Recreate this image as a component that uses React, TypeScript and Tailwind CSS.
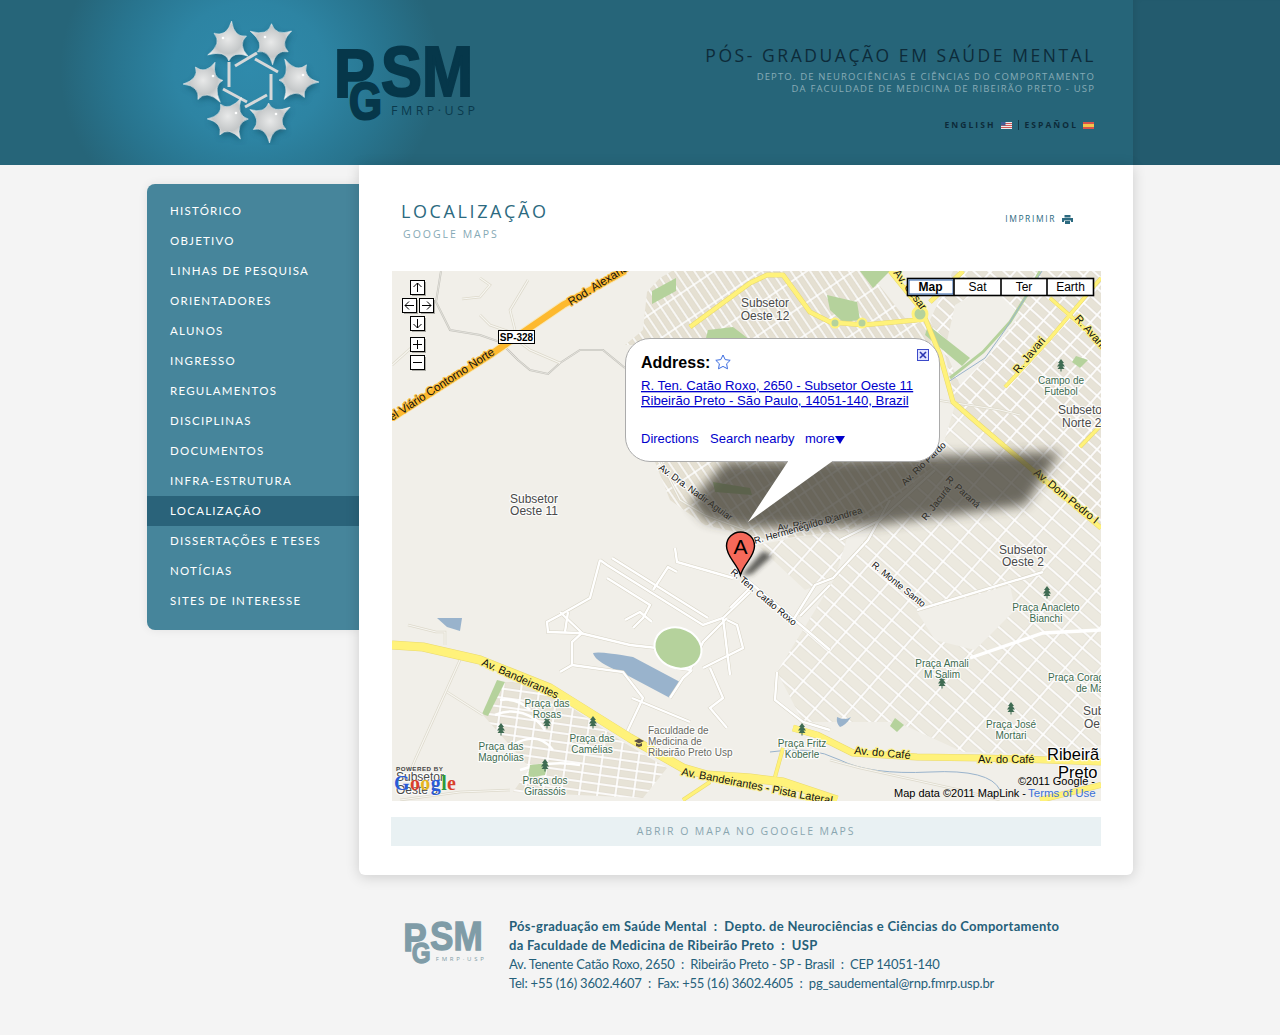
import React from "react";

const nav = ["HISTÓRICO","OBJETIVO","LINHAS DE PESQUISA","ORIENTADORES","ALUNOS","INGRESSO","REGULAMENTOS","DISCIPLINAS","DOCUMENTOS","INFRA-ESTRUTURA","LOCALIZAÇÃO","DISSERTAÇÕES E TESES","NOTÍCIAS","SITES DE INTERESSE"];

function starPath(cx: number, cy: number, r: number, rot: number) {
  const radii = [1, 0.8, 0.95, 0.74, 1.08, 0.84];
  const n = radii.length;
  const pts = radii.map((k, i) => {
    const a = rot + (i * Math.PI * 2) / n;
    return [cx + Math.cos(a) * r * k, cy + Math.sin(a) * r * k];
  });
  let d = `M${pts[0][0].toFixed(1)} ${pts[0][1].toFixed(1)}`;
  for (let i = 1; i <= n; i++) {
    const p = pts[i % n];
    const a = rot + ((i - 0.5) * Math.PI * 2) / n;
    const cpx = cx + Math.cos(a) * r * 0.32;
    const cpy = cy + Math.sin(a) * r * 0.32;
    d += `Q${cpx.toFixed(1)} ${cpy.toFixed(1)} ${p[0].toFixed(1)} ${p[1].toFixed(1)}`;
  }
  return d + "Z";
}

function Stars() {
  const stars: [number, number, number][] = [[230,44,-1.5],[272,43,-0.55],[296,81,0.05],[269,120,1.55],[229,119,1.05],[206,82,3.05]];
  const arms = ["229 62 229 87","235 66 257 53","255 59 278 72","271 74 271 100","267 95 245 107","247 102 223 89"];
  return (
    <svg width="140" height="130" viewBox="180 15 140 130" className="block">
      <defs>
        <radialGradient id="silver" cx="50%" cy="45%" r="60%">
          <stop offset="0%" stopColor="#e8e9e9" />
          <stop offset="60%" stopColor="#c4c7c8" />
          <stop offset="100%" stopColor="#f1f1f1" />
        </radialGradient>
        <filter id="starBlur" x="-40%" y="-40%" width="180%" height="180%"><feGaussianBlur stdDeviation="3" /></filter>
      </defs>
      {stars.map(([x, y, r], i) => <path key={i} d={starPath(x + 1, y + 3, 23, r)} fill="#0d3d50" opacity="0.5" filter="url(#starBlur)" />)}
      {arms.map((a, i) => {
        const [x1, y1, x2, y2] = a.split(" ");
        return <line key={i} x1={x1} y1={y1} x2={x2} y2={y2} stroke="#d6d8d9" strokeWidth="3" />;
      })}
      {stars.map(([x, y, r], i) => <path key={i} d={starPath(x, y, 23, r)} fill="url(#silver)" stroke="#f5f5f5" strokeWidth="0.5" strokeLinejoin="miter" />)}
      {stars.map(([x, y], i) => <circle key={i} cx={x + (i < 2 ? -7 : 7)} cy={y - 6} r="1.3" fill="#fff" />)}
    </svg>
  );
}

function PgsmLogo({ color, width, sub, small }: { color: string; width: number; sub: string; small?: boolean }) {
  return (
    <svg width={width} height={(width * 79) / 145} viewBox="332 43 145 79" className="block">
      <g fill={color} stroke={color} strokeWidth="2.2" fontWeight="700" fontFamily="Liberation Sans, sans-serif">
        <text x="334" y="97" fontSize="69" textLength="41" lengthAdjust="spacingAndGlyphs">P</text>
        <text x="349" y="119" fontSize="52" textLength="33" lengthAdjust="spacingAndGlyphs">G</text>
        <text x="381" y="96" fontSize="70" textLength="92" lengthAdjust="spacingAndGlyphs">SM</text>
      </g>
      <text x="391" y="115" fontSize={small ? 10.5 : 12.5} fill={sub} textLength="84" fontFamily="Open Sans, sans-serif">FMRP·USP</text>
    </svg>
  );
}

type LProps = { x: number; y: number; t: string; a?: "start" | "middle" | "end"; c?: string; s?: number; r?: number; h?: string };
function L({ x, y, t, a = "middle", c = "#4a4a4a", s = 10.5, r, h = "#fff" }: LProps) {
  return (
    <text x={x} y={y} textAnchor={a} fill={c} fontSize={s} stroke={h} strokeOpacity="0.85" strokeWidth="2.4" paintOrder="stroke" strokeLinejoin="round" transform={r !== undefined ? `rotate(${r} ${x} ${y})` : undefined}>{t}</text>
  );
}

function Tree({ x, y }: { x: number; y: number }) {
  return <path d={`M${x} ${y - 6}l-3 4h1.5l-2.5 3.5h2.5l-2 2.5h3v2.5h1v-2.5h3l-2-2.5h2.5l-2.5-3.5h1.5z`} fill="#3f6b52" />;
}

const white = [
  "600 560 607 565 703 625 723 618 750 592",
  "612 558 708 618",
  "600 560 590 598 560 615 547 622 548 632 580 633 630 645 657 648",
  "565 632 568 612",
  "560 612 582 633 572 642 572 665 560 672",
  "572 665 623 672 643 698 627 732",
  "653 590 668 567 677 572",
  "607 578 650 605 643 618 633 628",
  "625 620 640 612 652 622",
  "675 548 677 562 733 578",
  "657 648 677 668 690 670 703 642 727 618",
  "703 668 743 648 737 625 727 620",
  "670 698 683 678 692 670",
  "710 668 723 698 710 708 727 728",
  "632 698 690 722",
  "723 618 730 675",
  "733 568 803 627 830 650",
  "750 588 730 608",
  "790 625 815 585 833 578 868 540 890 500",
  "777 672 775 700 803 722 830 730",
  "840 540 880 520 935 470",
  "917 610 1043 572",
  "800 616 830 585",
];
const pale = [
  "441 271 436 302 450 330 480 335 500 342 518 360 530 370 548 374 560 363 580 350 603 350 625 368",
  "462 299 480 297 490 285 480 278","528 280 510 310 515 330","480 315 490 325 510 332","510 335 530 350 560 363",
  "392 365 420 340","408 625 436 632 445 632 445 645","460 660 415 760 410 772","447 692 483 715","660 460 680 500 705 515 745 530",
  "510 790 460 792 400 800","905 395 1000 410 1020 415","830 760 860 768 960 790 1000 800",
];
const yellow: [string, number][] = [
  ["690 327 750 283 767 275 783 275 810 312 830 322 863 325 917 320 923 313 940 355 953 402 983 428 1101 528", 4],
  ["890 271 920 308", 4], ["963 271 930 302", 4], ["1005 387 1047 342 1101 278", 3], ["1050 298 1101 343", 3], ["1080 447 1101 425", 3],
  ["793 728 817 735 853 753 917 757 983 758 1047 760 1101 762", 6], ["783 748 775 777", 3], ["683 800 710 782", 3],
  ["392 645 423 647 480 660 550 688 630 738 683 768 707 775 750 778 783 782 837 800", 8],
  ["1040 800 1101 785", 5],
];

function MapSvg() {
  const btn = (x: number, y: number, w: string) => (
    <g key={x + "-" + y}>
      <rect x={x + 1.5} y={y + 1.5} width="14" height="14" fill="#8b8b85" opacity="0.7" />
      <rect x={x} y={y} width="14" height="14" fill="#fff" stroke="#000" />
      <path d={w} fill="none" stroke="#000" strokeWidth="1" />
    </g>
  );
  const Y = "#fff27a";
  return (
    <svg width="709" height="530" viewBox="392 271 709 530" className="block font-['Liberation_Sans',sans-serif]">
      <defs>
        <pattern id="pNW" width="8" height="26" patternUnits="userSpaceOnUse" patternTransform="rotate(-34)"><rect width="8" height="26" fill="#fff" /><rect x="1" y="1" width="6" height="24" fill="#e5e0d2" stroke="#d8d3c4" strokeWidth="0.4" /></pattern>
        <pattern id="pNE" width="18" height="10" patternUnits="userSpaceOnUse" patternTransform="rotate(42)"><rect width="18" height="10" fill="#fff" /><rect x="1.1" y="1.1" width="15.8" height="7.8" fill="#e7e3d7" stroke="#d8d3c4" strokeWidth="0.4" /></pattern>
        <pattern id="pSE" width="27" height="13" patternUnits="userSpaceOnUse" patternTransform="rotate(41)"><rect width="27" height="13" fill="#fff" /><rect x="1.1" y="1.1" width="24.8" height="10.8" fill="#ece9df" stroke="#d8d3c4" strokeWidth="0.4" /></pattern>
        <pattern id="pSW" width="18" height="9" patternUnits="userSpaceOnUse" patternTransform="rotate(8)"><rect width="18" height="9" fill="#fff" /><rect x="1.1" y="1.1" width="15.8" height="6.8" fill="#e7e3d7" stroke="#d8d3c4" strokeWidth="0.4" /></pattern>
        <filter id="bubbleBlur" x="-20%" y="-40%" width="140%" height="180%"><feGaussianBlur stdDeviation="6" /></filter>
        <filter id="pinBlur" x="-50%" y="-50%" width="200%" height="200%"><feGaussianBlur stdDeviation="2.5" /></filter>
      </defs>
      <rect x="392" y="271" width="709" height="530" fill="#f1efe9" />
      <polygon points="647,292 660,278 672,271 868,271 905,318 935,320 930,345 625,345 643,330" fill="url(#pNW)" />
      <polygon points="655,462 940,462 880,510 850,530 770,540 705,525 670,500" fill="url(#pNW)" />
      <polygon points="953,271 1101,271 1101,528 985,430 955,400 945,355 930,320" fill="url(#pNE)" />
      <polygon points="835,578 880,520 938,462 955,405 985,430 1101,528 1101,745 1050,755 963,752 897,722 803,722 777,672" fill="url(#pSE)" />
      <polygon points="757,545 850,528 835,578 805,590" fill="url(#pSE)" />
      <polygon points="955,305 990,285 1020,315 985,360 960,385 945,350" fill="#f1efe9" />
      <polygon points="917,612 1010,585 1015,610 975,650 935,640" fill="#f1efe9" />
      <polygon points="483,715 497,682 533,682 623,742 667,768 643,798 513,792 530,768" fill="url(#pSW)" />
      {["M500 700a35 35 0 0 1 30 10","M495 715a40 40 0 0 1 50 15","M513 745q25-15 40 5","M520 770q30-10 60-5"].map((d, i) => <path key={i} d={d} fill="none" stroke="#fff" strokeWidth="2.5" />)}

      <g fill="#b5d29c">
        <polygon points="652,291 676,278 676,291 652,304" />
        <polygon points="708,330 733,327 750,340 720,345 706,338" />
        <polygon points="827,295 857,302 860,320 843,322 830,310" />
        <polygon points="860,271 890,271 873,288" />
        <polygon points="928,325 970,358 962,366 925,335" />
        <polygon points="713,482 750,488 752,495 715,492" />
        <polygon points="497,680 505,682 488,716 482,714" />
        <polygon points="530,765 548,763 545,775 528,778" />
        <polygon points="1076,356 1088,360 1080,368 1072,362" />
        <polygon points="895,718 904,725 897,732 890,726" />
      </g>
      <path d="M950 378 L983 352 L1010 322 L1030 290 L1040 271" fill="none" stroke="#b5d29c" strokeWidth="3" />
      <path d="M948 382 L985 358 L1005 330 L1025 298 L1042 271" fill="none" stroke="#99b3cc" strokeWidth="1" />
      <path d="M770 752 Q810 745 840 760 T930 772 T1000 790" fill="none" stroke="#99b3cc" strokeWidth="1" />
      <g fill="#99b3cc">
        <path d="M593 653 Q600 651 633 657 L680 682 L670 698 L623 673 Q595 662 593 653Z" />
        <polygon points="437,618 462,618 460,631 447,627" />
        <path d="M837 717 Q845 721 851 717 Q846 725 840 727 Q836 723 837 717Z" />
      </g>

      {pale.map((p, i) => <polyline key={i} points={p} fill="none" stroke={i === 0 ? "#c4c2bb" : "#ddd9cb"} strokeWidth={i === 0 ? 2 : 2.6} />)}
      {pale.map((p, i) => <polyline key={i} points={p} fill="none" stroke="#f7f6f1" strokeWidth={i === 0 ? 0.6 : 1.2} />)}
      {white.map((p, i) => <polyline key={i} points={p} fill="none" stroke="#d8d4c6" strokeWidth="3.4" />)}
      {white.map((p, i) => <polyline key={i} points={p} fill="none" stroke="#fff" strokeWidth="2.4" />)}
      <polyline points="970,658 1043,633 1101,630" fill="none" stroke="#fff" strokeWidth="3.4" />
      <ellipse cx="678" cy="648" rx="24" ry="20" transform="rotate(22 678 648)" fill="#b5d29c" stroke="#fff" strokeWidth="2" />

      <polyline points="392,418 490,355 563,305 625,271" fill="none" stroke="#f7e8bb" strokeWidth="8.5" />
      <polyline points="392,418 490,355 563,305 625,271" fill="none" stroke="#fdb92f" strokeWidth="6.5" />
      {yellow.map(([p, w], i) => <polyline key={i} points={p} fill="none" stroke="#e9d96f" strokeLinejoin="round" strokeWidth={w + 1} />)}
      {yellow.map(([p, w], i) => <polyline key={i} points={p} fill="none" stroke={Y} strokeLinejoin="round" strokeWidth={w} />)}
      <circle cx="920" cy="314" r="7" fill="#b5d29c" stroke={Y} strokeWidth="3" />
      <circle cx="835" cy="323" r="4.5" fill="#b5d29c" stroke={Y} strokeWidth="2" />
      <circle cx="862" cy="323" r="4.5" fill="#b5d29c" stroke={Y} strokeWidth="2" />

      <L x={392} y={421} t="el Viário Contorno Norte" a="start" c="#111" s={11.5} r={-33} h="#fdb92f" />
      <L x={571} y={306} t="Rod. Alexandre" a="start" c="#111" s={11.5} r={-32} h="#fdb92f" />
      <L x={893} y={273} t="Av. César" a="start" c="#111" s={11} r={53} h={Y} />
      <L x={1018} y={374} t="R. Javari" a="start" c="#111" s={11} r={-50} h={Y} />
      <L x={1074} y={319} t="R. Avanhandava" a="start" c="#111" s={11} r={48} h={Y} />
      <L x={1033} y={474} t="Av. Dom Pedro I" a="start" c="#111" s={11} r={39} h={Y} />
      <L x={905} y={486} t="Av. Rio Pardo" a="start" c="#111" s={9.5} r={-44} />
      <L x={945} y={480} t="R. Paraná" a="start" c="#111" s={9.5} r={42} />
      <L x={926} y={521} t="R. Jacurá" a="start" c="#111" s={9.5} r={-52} />
      <L x={658} y={469} t="Av. Dra. Nadir Aguiar" a="start" c="#111" s={9.5} r={36} />
      <L x={778} y={531} t="Av. Rio Pardo" a="start" c="#111" s={9.5} r={-8} />
      <L x={755} y={544} t="R. Hermenegildo D'andrea" a="start" c="#111" s={9.5} r={-16} />
      <L x={730} y={573} t="R. Ten. Catão Roxo" a="start" c="#111" s={9.5} r={40} />
      <L x={871} y={566} t="R. Monte Santo" a="start" c="#111" s={9.5} r={39} />
      <L x={481} y={665} t="Av. Bandeirantes" a="start" c="#111" s={11} r={24} h={Y} />
      <L x={681} y={775} t="Av. Bandeirantes - Pista Lateral" a="start" c="#111" s={11} r={11} h={Y} />
      <L x={854} y={754} t="Av. do Café" a="start" c="#111" s={11} r={5} h={Y} />
      <L x={978} y={763} t="Av. do Café" a="start" c="#111" s={11} h={Y} />

      <L x={765} y={307} t="Subsetor" s={12} /><L x={765} y={320} t="Oeste 12" s={12} />
      <L x={534} y={503} t="Subsetor" s={12} /><L x={534} y={515} t="Oeste 11" s={12} />
      <L x={1023} y={554} t="Subsetor" s={12} /><L x={1023} y={566} t="Oeste 2" s={12} />
      <L x={1058} y={414} t="Subsetor" a="start" s={12} /><L x={1062} y={427} t="Norte 2" a="start" s={12} />
      {([[1061,369],[1047,596],[942,686],[1011,712],[802,733],[547,726],[593,726],[501,733],[545,769]] as [number,number][]).map(([x,y],i)=><Tree key={i} x={x} y={y-4} />)}
      {([[1061,384,"Campo de"],[1061,395,"Futebol"],[1046,611,"Praça Anacleto"],[1046,622,"Bianchi"],[942,667,"Praça Amali"],[942,678,"M Salim"],[1011,728,"Praça José"],[1011,739,"Mortari"],[802,747,"Praça Fritz"],[802,758,"Koberle"],[547,707,"Praça das"],[547,718,"Rosas"],[592,742,"Praça das"],[592,753,"Camélias"],[501,750,"Praça das"],[501,761,"Magnólias"],[545,784,"Praça dos"],[545,795,"Girassóis"]] as [number,number,string][]).map(([x,y,t],i)=><L key={i} x={x} y={y} t={t} c="#3d6b4f" s={10} />)}
      <L x={1048} y={681} t="Praça Corag" a="start" c="#3d6b4f" s={10} />
      <L x={1076} y={692} t="de Ma" a="start" c="#3d6b4f" s={10} />
      <L x={1083} y={715} t="Sub" a="start" s={12} /><L x={1084} y={728} t="Oe" a="start" s={12} />
      <L x={648} y={734} t="Faculdade de" a="start" c="#6a6a62" s={10} />
      <L x={648} y={745} t="Medicina de" a="start" c="#6a6a62" s={10} />
      <L x={648} y={756} t="Ribeirão Preto Usp" a="start" c="#6a6a62" s={10} />
      <path d="M634 741l5-2.5 5 2.5-5 2.5zM636 743v3l3 1 3-1v-3l-3 1.5z" fill="#5b5147" />

      <rect x="498.5" y="330.5" width="36" height="13" fill="#fff" stroke="#000" />
      <text x="516.5" y="341" textAnchor="middle" fontSize="10" fontWeight="700" fill="#000">SP-328</text>

      <polygon points="690,503 725,462 1060,452 1025,505 870,526 745,528 705,520" fill="#3a382f" opacity="0.72" filter="url(#bubbleBlur)" />
      <polygon points="741,576 763,551 772,556 752,574" fill="#2f2f2a" opacity="0.75" filter="url(#pinBlur)" />
      <path d="M740.5 575 C737 563 726.5 557 726.5 546 A14 14 0 0 1 754.5 546 C754.5 557 744 563 740.5 575Z" fill="#f6695a" stroke="#000" strokeWidth="1.4" />
      <text x="740.5" y="554" textAnchor="middle" fontSize="21" fill="#000">A</text>

      <path d="M650 338.5H915a24.5 24.5 0 0 1 24.5 24.5V437a24.5 24.5 0 0 1-24.5 24.5H832L748 522L788 461.5H650a24.5 24.5 0 0 1-24.5-24.5V363a24.5 24.5 0 0 1 24.5-24.5Z" fill="#fff" />
      <path d="M788 461.5H650a24.5 24.5 0 0 1-24.5-24.5V363a24.5 24.5 0 0 1 24.5-24.5H915a24.5 24.5 0 0 1 24.5 24.5V437a24.5 24.5 0 0 1-24.5 24.5H832" fill="none" stroke="#ababab" strokeWidth="1" />
      <text x="641" y="368" fontSize="16" fontWeight="700" fill="#000">Address:</text>
      <path d="M723 355l2.2 4.6 5 .7-3.6 3.5.9 5-4.5-2.4-4.5 2.4.9-5-3.6-3.5 5-.7z" fill="#fff" stroke="#3a6be0" strokeWidth="1" />
      <rect x="917.5" y="349.5" width="11" height="11" fill="#dfe3ff" stroke="#3b49c9" />
      <path d="M920 352l6 6M926 352l-6 6" stroke="#2a35b0" strokeWidth="1.6" />
      <text x="641" y="390" fontSize="13.2" fill="#0000cc" textDecoration="underline">R. Ten. Catão Roxo, 2650 - Subsetor Oeste 11</text>
      <text x="641" y="405" fontSize="13.2" fill="#0000cc" textDecoration="underline">Ribeirão Preto - São Paulo, 14051-140, Brazil</text>
      <text x="641" y="443" fontSize="13" fill="#0000cc">Directions</text>
      <text x="710" y="443" fontSize="13" fill="#0000cc">Search nearby</text>
      <text x="805" y="443" fontSize="13" fill="#0000cc">more</text>
      <polygon points="835,436 845,436 840,444" fill="#0000cc" />

      {btn(410.5, 280.5, "M417.5 292v-9M413.5 287l4-4 4 4")}
      {btn(402.5, 298.5, "M414 305.5h-9M409 301.5l-4 4 4 4")}
      {btn(419.5, 298.5, "M422 305.5h9M427 301.5l4 4-4 4")}
      {btn(410.5, 316.5, "M417.5 319v9M413.5 324l4 4 4-4")}
      {btn(410.5, 337.5, "M413 344.5h9M417.5 340v9")}
      {btn(410.5, 355.5, "M413 362.5h9")}

      <g>
        <rect x="907.5" y="278.5" width="186" height="17" fill="#fff" stroke="#000" strokeWidth="1.6" />
        <rect x="909" y="280" width="44" height="14" fill="none" stroke="#2a5fa8" strokeWidth="1" />
        <path d="M954 278v18M1001 278v18M1047 278v18" stroke="#000" strokeWidth="1.6" />
        <text x="930.5" y="291" textAnchor="middle" fontSize="12" fontWeight="700" fill="#000">Map</text>
        <text x="977.5" y="291" textAnchor="middle" fontSize="12" fill="#000">Sat</text>
        <text x="1024" y="291" textAnchor="middle" fontSize="12" fill="#000">Ter</text>
        <text x="1070.5" y="291" textAnchor="middle" fontSize="12" fill="#000">Earth</text>
      </g>

      <L x={1047} y={760} t="Ribeirã" a="start" c="#000" s={16.5} />
      <L x={1058} y={778} t="Preto" a="start" c="#000" s={16.5} />
      <text x="1018" y="785" fontSize="11" fill="#000">©2011 Google -</text>
      <text x="894" y="797" fontSize="11" fill="#000">Map data ©2011 MapLink -</text>
      <text x="1028" y="797" fontSize="11.5" fill="#3a6fd8">Terms of Use</text>
      <text x="396" y="771" fontSize="6.2" fontWeight="700" fill="#444" letterSpacing="0.5">POWERED BY</text>
      <L x={396} y={781} t="Subsetor" a="start" s={12} />
      <L x={396} y={794} t="Oeste 5" a="start" s={12} />
      <text x="394" y="790" fontSize="20" fontWeight="700" stroke="#fff" strokeOpacity="0.5" strokeWidth="0.6" paintOrder="stroke" textLength="62" fontFamily="Liberation Serif, serif">
        <tspan fill="#2a5bd7">G</tspan><tspan fill="#d8402c">o</tspan><tspan fill="#e5b51f">o</tspan><tspan fill="#2a5bd7">g</tspan><tspan fill="#2f9a3a">l</tspan><tspan fill="#d8402c">e</tspan>
      </text>
    </svg>
  );
}

export default function App() {
  return (
    <div className="min-h-[1035px] bg-[#f4f4f4] font-['Open_Sans',sans-serif]">
      <header className="flex h-[165px]">
        <div className="flex w-[1133px] shrink-0 bg-[#266579] bg-[radial-gradient(ellipse_190px_170px_at_250px_70px,#2f8aab_0%,#2d84a3_40%,#28748e_72%,rgba(38,101,121,0)_100%)]">
          <div className="ml-[180px] mt-[15px]"><Stars /></div>
          <div className="ml-[12px] mt-[43px]"><PgsmLogo color="#06374a" sub="#0a3a4d" width={145} /></div>
          <div className="ml-auto mr-[39px] mt-[44px] text-right">
            <p className="mr-[-2px] h-[22px] text-[17.5px] leading-[22px] tracking-[2.55px] text-[#0d2b39]">PÓS- GRADUAÇÃO EM SAÚDE MENTAL</p>
            <p className="mr-[-1px] mt-[5px] text-[9.5px] leading-[12px] tracking-[1.15px] text-[#86abb6]">DEPTO. DE NEUROCIÊNCIAS E CIÊNCIAS DO COMPORTAMENTO</p>
            <p className="mr-[-1px] text-[9.5px] leading-[12px] tracking-[1.15px] text-[#86abb6]">DA FACULDADE DE MEDICINA DE RIBEIRÃO PRETO - USP</p>
            <div className="mt-[24px] flex items-center justify-end gap-[5px] text-[8.5px] font-bold leading-[12px] tracking-[2.05px] text-[#0d2b39]">
              <span>ENGLISH</span>
              <svg width="11" height="7" viewBox="0 0 11 7" className="block">
                <rect width="11" height="7" fill="#eee" /><path d="M0 1.5h11M0 3.5h11M0 5.5h11" stroke="#d05a5a" /><rect width="4.5" height="3.5" fill="#3f5f96" />
              </svg>
              <span className="mx-[1px] h-[10px] w-px bg-[#123746]" />
              <span>ESPAÑOL</span>
              <svg width="11" height="7" viewBox="0 0 11 7" className="block">
                <rect width="11" height="7" fill="#d9534a" /><rect y="2" width="11" height="3" fill="#f2c44c" />
              </svg>
            </div>
          </div>
        </div>
        <div className="flex-1 bg-[#235b6e] shadow-[inset_6px_0_6px_-4px_rgba(0,0,0,0.08)]" />
      </header>

      <main className="ml-[147px] flex w-[986px]">
        <nav className="mt-[19px] h-[446px] w-[212px] shrink-0 rounded-l-[8px] bg-[#46859b] pt-[12px] shadow-[0_0_10px_rgba(0,0,0,0.08)]">
          {nav.map((n) => (
            <a key={n} className={`block h-[30px] pl-[23px] font-['Lato',sans-serif] text-[11.5px] leading-[30px] tracking-[1.25px] text-white ${n === "LOCALIZAÇÃO" ? "bg-[#2a637a]" : ""}`}>{n}</a>
          ))}
        </nav>
        <section className="relative h-[710px] w-[774px] shrink-0 rounded-b-[6px] bg-white shadow-[0_2px_14px_rgba(0,0,0,0.16)]">
          <div className="flex h-[106px] justify-between pl-[42px] pr-[60px] pt-[34px]">
            <div>
              <h1 className="text-[18px] leading-[24px] tracking-[2.6px] text-[#2c6a80]">LOCALIZAÇÃO</h1>
              <p className="ml-[2px] mt-[1px] text-[10.5px] font-medium leading-[20px] tracking-[2px] text-[#86a9b5]">GOOGLE MAPS</p>
            </div>
            <div className="mt-[12px] flex h-[16px] items-center gap-[6px] text-[8.5px] tracking-[1.6px] text-[#2c6a80]">
              <span>IMPRIMIR</span>
              <svg width="11" height="9" viewBox="0 0 11 9" className="block" fill="#2c6a80">
                <path d="M2.5 0h6v2.5h-6zM0 3h11v4H9V5.5H2V7H0zM3 6h5v3H3z" />
              </svg>
            </div>
          </div>
          <div className="ml-[33px]"><MapSvg /></div>
          <a className="ml-[32px] mt-[16px] block h-[29px] w-[710px] bg-[#e9f1f3] text-center text-[10.5px] font-medium leading-[29px] tracking-[1.9px] text-[#8aa6b0]">ABRIR O MAPA NO GOOGLE MAPS</a>
        </section>
      </main>

      <footer className="ml-[402px] mt-[42px] flex w-[700px] pb-[42px]">
        <div className="mt-[3px]"><PgsmLogo color="#7f9ca7" sub="#7f9ca7" width={83} small /></div>
        <div className="ml-[24px] whitespace-nowrap font-['Lato',sans-serif] text-[13px] leading-[19px] tracking-[-0.2px] text-[#25607a]">
          <p className="font-bold tracking-[0.3px]">Pós-graduação em Saúde Mental &nbsp;:&nbsp; Depto. de Neurociências e Ciências do Comportamento</p>
          <p className="font-bold tracking-[0.3px]">da Faculdade de Medicina de Ribeirão Preto &nbsp;:&nbsp; USP</p>
          <p>Av. Tenente Catão Roxo, 2650 &nbsp;:&nbsp; Ribeirão Preto - SP - Brasil &nbsp;:&nbsp; CEP 14051-140</p>
          <p>Tel: +55 (16) 3602.4607 &nbsp;:&nbsp; Fax: +55 (16) 3602.4605 &nbsp;:&nbsp; pg_saudemental@rnp.fmrp.usp.br</p>
        </div>
      </footer>
    </div>
  );
}
